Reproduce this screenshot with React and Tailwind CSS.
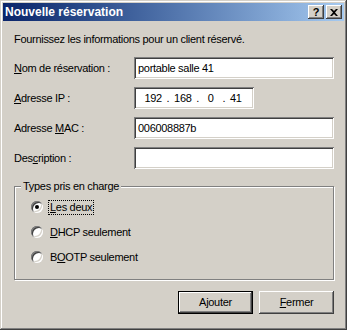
import React from 'react';

const sunken =
  'shadow-[inset_1px_1px_#808080,inset_-1px_-1px_#ffffff,inset_2px_2px_#404040,inset_-2px_-2px_#d4d0c8]';
const raised =
  'shadow-[inset_-1px_-1px_#404040,inset_1px_1px_#ffffff,inset_-2px_-2px_#808080]';

const Field = ({ label, children, width = 'w-[200px]' }) => (
  <div className="flex items-center h-[22px]">
    <div className="w-[120px]">{label}</div>
    <div className={`${width} h-[22px] bg-white ${sunken} flex items-center px-[4px]`}>{children}</div>
  </div>
);

const Radio = ({ checked, children, focused }) => (
  <div className="flex items-center h-[14px] gap-[6px]">
    <div className={`w-[12px] h-[12px] rounded-full bg-white flex items-center justify-center ${sunken}`}>
      {checked && <div className="w-[4px] h-[4px] rounded-full bg-black" />}
    </div>
    <span className={focused ? 'outline outline-1 outline-dotted outline-black px-[1px]' : 'px-[1px]'}>{children}</span>
  </div>
);

const TitleButton = ({ children }) => (
  <div className={`w-[16px] h-[14px] bg-[#d4d0c8] ${raised} flex items-center justify-center text-black text-[11px] font-bold leading-none`}>
    {children}
  </div>
);

export default function App() {
  return (
    <div
      className="w-[347px] h-[330px] bg-[#d4d0c8] text-black text-[11px] leading-[13px] tracking-[-0.3px] shadow-[inset_-1px_-1px_#404040,inset_1px_1px_#d4d0c8,inset_-2px_-2px_#808080,inset_2px_2px_#ffffff] flex flex-col"
      style={{ fontFamily: '"Liberation Sans", Arial, sans-serif' }}
    >
      <div className="mx-[3px] mt-[3px] h-[18px] bg-gradient-to-r from-[#0a246a] to-[#a6caf0] flex items-center pl-[2px] pr-[2px]">
        <span className="flex-1 text-white font-bold text-[12px] tracking-normal">Nouvelle réservation</span>
        <div className="flex gap-[2px]">
          <TitleButton>?</TitleButton>
          <TitleButton>
            <svg width="8" height="7" viewBox="0 0 8 7">
              <path d="M0 0h2l2 2 2-2h2L5 3.5 8 7H6L4 5 2 7H0l3-3.5z" fill="#000" />
            </svg>
          </TitleButton>
        </div>
      </div>

      <div className="pl-[14px] pr-[13px] pt-[12px]">
        <p>Fournissez les informations pour un client réservé.</p>

        <div className="mt-[11px] flex flex-col gap-[8px]">
          <Field label={<span><u>N</u>om de réservation :</span>}>portable salle 41</Field>
          <Field label={<span><u>A</u>dresse IP :</span>} width="w-[120px]">
            <div className="flex w-full justify-around pl-[4px] pr-[6px]">
              <span>192</span><span>.</span><span>168</span><span>.</span><span className="px-[4px]">0</span><span>.</span><span>41</span>
            </div>
          </Field>
          <Field label={<span>Adresse <u>M</u>AC :</span>}>006008887b</Field>
          <Field label={<span>Des<u>c</u>ription :</span>} />
        </div>

        <div className="mt-[17px] relative border border-[#808080] shadow-[inset_1px_1px_#ffffff,1px_1px_#ffffff] h-[94px] w-[320px]">
          <span className="absolute -top-[7px] left-[6px] bg-[#d4d0c8] px-[2px]">Types pris en charge</span>
          <div className="pl-[16px] pt-[13px] flex flex-col gap-[11px]">
            <Radio checked focused><u>L</u>es deux</Radio>
            <Radio><u>D</u>HCP seulement</Radio>
            <Radio>B<u>O</u>OTP seulement</Radio>
          </div>
        </div>

        <div className="mt-[11px] flex justify-end gap-[6px]">
          <div className="w-[75px] h-[23px] border border-black bg-[#d4d0c8] shadow-[inset_-1px_-1px_#404040,inset_1px_1px_#ffffff,inset_-2px_-2px_#808080] flex items-center justify-center">
            Ajouter
          </div>
          <div className={`w-[75px] h-[23px] bg-[#d4d0c8] ${raised} flex items-center justify-center`}>
            <span><u>F</u>ermer</span>
          </div>
        </div>
      </div>
    </div>
  );
}
